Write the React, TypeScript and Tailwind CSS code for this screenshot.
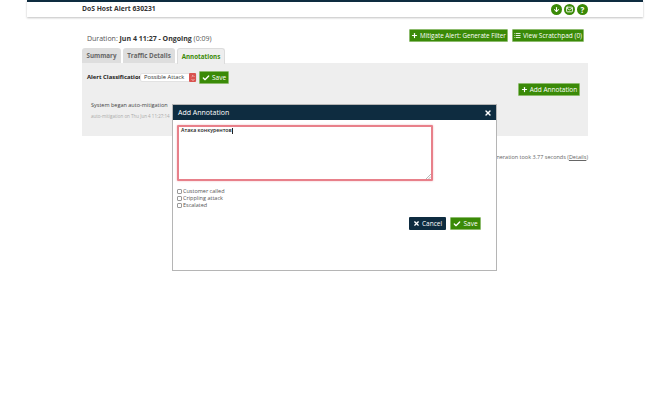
import { Check, ChevronDown, ChevronUp, Plus, X, List, ArrowDown, Mail } from 'lucide-react';

const GreenButton = ({ icon, label, className }: { icon: React.ReactNode; label: string; className: string }) => (
  <div className={`flex items-center justify-center gap-[2px] h-[13px] rounded-[1px] bg-[#3a8a07] border border-[#8dbb6e] text-white text-[6.5px] whitespace-nowrap ${className}`}>
    {icon}
    <span>{label}</span>
  </div>
);

const App = () => {
  return (
    <div className="relative w-[670px] h-[400px] overflow-hidden bg-white text-[#333] font-['Open_Sans',sans-serif]">
      {/* HEADER */}
      <header className="mx-[27px] h-[17px] bg-white shadow-[0_1px_2px_rgba(0,0,0,0.25)]">
        <div className="h-[2px] bg-[#0e2c40]" />
        <div className="flex items-center justify-between h-[15px] pl-[55px] pr-[55px]">
          <span className="text-[6.75px] font-bold text-[#333]">DoS Host Alert 630231</span>
          <div className="flex gap-[2px]">
            <span className="flex items-center justify-center w-[11px] h-[11px] rounded-full bg-[#3a8a07] text-white">
              <ArrowDown size={7} strokeWidth={3.5} />
            </span>
            <span className="flex items-center justify-center w-[11px] h-[11px] rounded-full bg-[#3a8a07] text-white">
              <Mail size={7} strokeWidth={3} />
            </span>
            <span className="flex items-center justify-center w-[11px] h-[11px] rounded-full bg-[#3a8a07] text-white text-[8px] font-bold leading-none">?</span>
          </div>
        </div>
      </header>

      <main className="w-[506px] ml-[82px]">
        {/* DURATION + ACTIONS */}
        <div className="flex items-start h-[13px] mt-[12px] pl-[5px] pr-[4px]">
          <p className="pt-[5px] text-[7px] leading-[10px] text-[#555]">
            Duration: <b className="text-[#333]">Jun 4 11:27 - Ongoing</b> (0:09)
          </p>
          <div className="flex gap-[4px] ml-auto">
            <GreenButton className="w-[99px] !text-[6.25px]" icon={<Plus size={7} strokeWidth={4} />} label="Mitigate Alert: Generate Filter" />
            <GreenButton className="w-[72px]" icon={<List size={7} strokeWidth={3} />} label="View Scratchpad (0)" />
          </div>
        </div>

        {/* TABS */}
        <div className="flex gap-[2px] h-[15px] mt-[6px] text-[6.25px] font-bold">
          <div className="flex items-center justify-center w-[39px] rounded-t-[3px] bg-[#dedede] text-[#666]">Summary</div>
          <div className="flex items-center justify-center w-[52px] rounded-t-[3px] bg-[#dedede] text-[#666]">Traffic Details</div>
          <div className="flex items-center justify-center w-[48px] h-[16px] rounded-t-[3px] bg-[#eeeeee] border border-b-0 border-[#dcdcdc] text-[#3a8a07] z-10">Annotations</div>
        </div>

        {/* PANEL */}
        <section className="h-[73px] bg-[#eeeeee] pl-[5px] pr-[8px] pt-[8px]">
          <div className="flex items-center">
            <span className="text-[5.9px] font-bold text-[#222] w-[53px] whitespace-nowrap">Alert Classification</span>
            <div className="flex items-center justify-between w-[57px] h-[9px] bg-white border border-[#e2e2e2] rounded-[2px] pl-[3px] text-[5.75px] text-[#333]">
              Possible Attack
              <span className="flex flex-col items-center justify-center w-[7px] h-[9px] bg-[#d9534f] rounded-[1px] text-white">
                <ChevronUp size={4} strokeWidth={4} />
                <ChevronDown size={4} strokeWidth={4} />
              </span>
            </div>
            <GreenButton className="w-[30px] ml-[2px]" icon={<Check size={8} strokeWidth={4} />} label="Save" />
          </div>
          <div className="flex justify-end mt-[-1px]">
            <GreenButton className="w-[62px]" icon={<Plus size={7} strokeWidth={4} />} label="Add Annotation" />
          </div>
          <p className="mt-[5px] ml-[4px] text-[5.5px] leading-[8px] text-[#444]">System began auto-mitigation</p>
          <p className="mt-[4px] ml-[4px] text-[4.5px] leading-[6px] text-[#aaa]">auto-mitigation on Thu Jun 4 11:27:14</p>
        </section>

        <p className="mt-[17px] text-right text-[5.5px] leading-[8px] text-[#666]">
          Page generation took 3.77 seconds (<span className="underline">Details</span>)
        </p>
      </main>

      {/* MODAL */}
      <div className="absolute left-[172px] top-[104px] w-[325px] h-[167px] bg-white border border-[#b5b5b5]">
        <div className="flex items-center justify-between h-[15px] bg-[#0e2c40] pl-[5px] pr-[4px] pt-px text-white">
          <span className="text-[7px]">Add Annotation</span>
          <X size={8} strokeWidth={4} />
        </div>
        <div className="px-[4px] pt-[5px]">
          <div className="relative w-[256px] h-[56px] border-2 border-[#e8808a] rounded-[1px] shadow-[0_0_2px_rgba(232,128,138,0.6)] px-[2px] text-[5.25px] leading-[7px] font-semibold text-[#222]">
            Атака конкурентов
            <span className="inline-block w-px h-[6px] bg-[#222] align-middle" />
            {/* RESIZE HANDLE */}
            <svg className="absolute right-0 bottom-0" width="5" height="5" viewBox="0 0 5 5">
              <path d="M0 5L5 0M2.5 5L5 2.5" stroke="#999" strokeWidth="0.7" />
            </svg>
          </div>
          <div className="mt-[7px] flex flex-col text-[5.5px] leading-[7px] text-[#555]">
            {['Customer called', 'Crippling attack', 'Escalated'].map((label) => (
              <div key={label} className="flex items-center gap-px">
                <span className="w-[5px] h-[5px] border border-[#999] rounded-[1px] bg-white" />
                <span>{label}</span>
              </div>
            ))}
          </div>
          <div className="flex justify-end gap-[4px] mt-[8px] mr-[11px]">
            <div className="flex items-center justify-center gap-[2px] w-[37px] h-[13px] rounded-[1px] bg-[#0e2c40] text-white text-[6.5px]">
              <X size={7} strokeWidth={4} />
              <span>Cancel</span>
            </div>
            <GreenButton className="w-[31px]" icon={<Check size={8} strokeWidth={4} />} label="Save" />
          </div>
        </div>
      </div>
    </div>
  );
};

export default App;
